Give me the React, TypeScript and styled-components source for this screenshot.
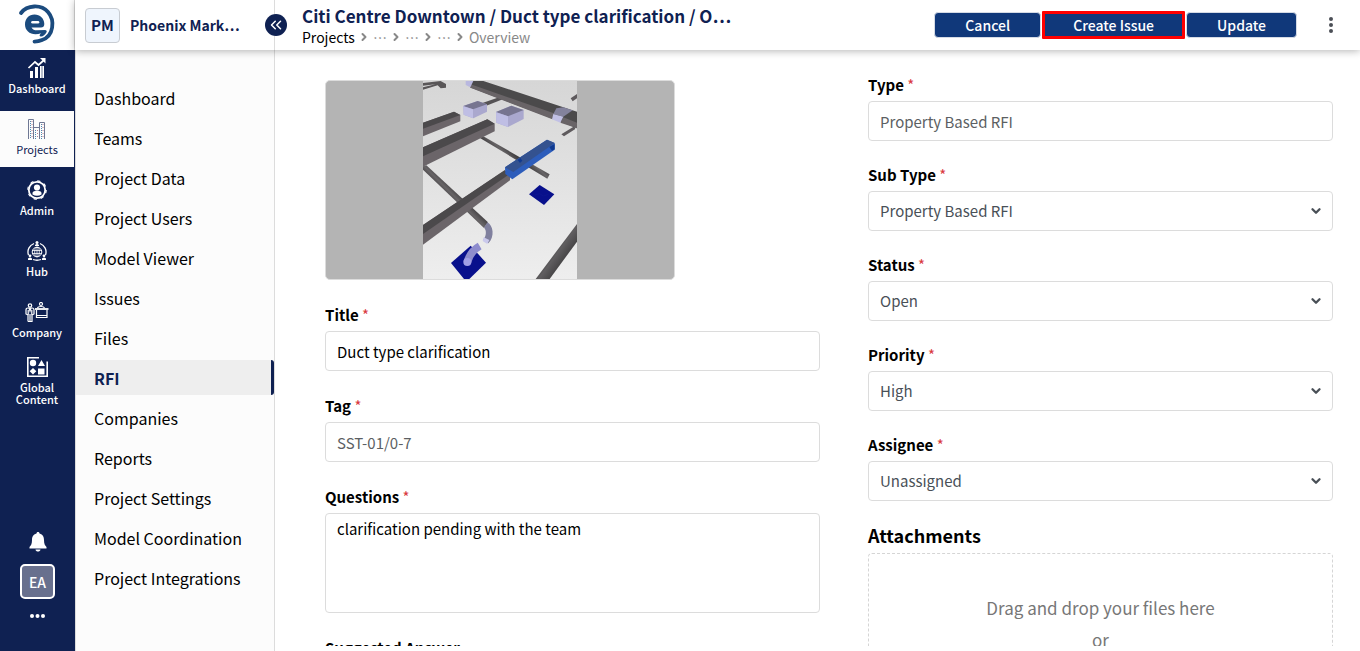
import React from "react";
import styled, { createGlobalStyle, css } from "styled-components";
import { ChevronDown, ChevronRight, ChevronsLeft } from "lucide-react";

const navy = "#0f2152";
const line = "#dcdcdc";

const GlobalStyle = createGlobalStyle`
  * { box-sizing: border-box; }
  body {
    margin: 0;
    background: #fff;
    font-family: "Noto Sans CJK JP", "Noto Sans", sans-serif;
    font-size: 15px;
    color: #000;
  }
  button, input, select, textarea { font: inherit; }
  button { cursor: pointer; }
`;

const Shell = styled.div`
  display: flex;
  height: 100vh;
  overflow: hidden;
`;

const Rail = styled.nav`
  display: flex;
  flex-direction: column;
  flex: 0 0 75px;
  background: ${navy};
`;

const LogoLink = styled.a`
  display: block;
  flex: 0 0 50px;
  background: #fff;
  border-right: 1px solid ${line};
  svg { display: block; }
`;

const RailLinks = styled.div`
  display: flex;
  flex-direction: column;
  gap: 5px;
  flex: 1;
`;

const RailLink = styled.a<{ $active?: boolean }>`
  display: flex;
  flex-direction: column;
  align-items: center;
  justify-content: center;
  gap: 4px;
  height: 56px;
  padding-bottom: 5px;
  margin-right: 1px;
  font-size: 11px;
  font-weight: ${(p) => (p.$active ? 400 : 500)};
  line-height: 12px;
  text-align: center;
  text-decoration: none;
  color: ${(p) => (p.$active ? navy : "#fff")};
  background: ${(p) => (p.$active ? "#fcfcfc" : "transparent")};
  svg { display: block; flex: none; }
`;

const RailFooter = styled.div`
  display: flex;
  flex-direction: column;
  align-items: center;
  gap: 12px;
  padding-bottom: 30px;
  color: #fff;
`;

const IconButton = styled.button`
  display: flex;
  padding: 0;
  border: 0;
  background: none;
  color: inherit;
`;

const Avatar = styled.button`
  width: 35px;
  height: 35px;
  padding: 0;
  border: 2px solid #fff;
  border-radius: 5px;
  background: #68708e;
  color: #fff;
  font-size: 14px;
  font-weight: 500;
  line-height: 20px;
`;

const Workspace = styled.div`
  display: flex;
  flex-direction: column;
  flex: 1;
  min-width: 0;
`;

const TopBar = styled.header`
  display: flex;
  align-items: stretch;
  flex: 0 0 50px;
  background: #fff;
  box-shadow: 0 1px 8px rgba(0, 0, 0, 0.3);
  z-index: 1;
`;

const ProjectSwitch = styled.div`
  position: relative;
  display: flex;
  align-items: center;
  gap: 10px;
  flex: 0 0 200px;
  padding-left: 10px;
  border-right: 1px solid ${line};
  color: ${navy};
  font-size: 14px;
  font-weight: 700;
  line-height: 20px;
  white-space: nowrap;
`;

const ProjectBadge = styled.span`
  display: flex;
  align-items: center;
  justify-content: center;
  width: 35px;
  height: 35px;
  border: 1px solid #c8ccd2;
  border-radius: 4px;
  background: #eff5fd;
  font-size: 15px;
`;

const CollapseButton = styled.button`
  position: absolute;
  right: -13px;
  top: 14px;
  display: flex;
  align-items: center;
  justify-content: center;
  width: 22px;
  height: 22px;
  padding: 0;
  border: 0;
  border-radius: 50%;
  background: ${navy};
  color: #fff;
`;

const Heading = styled.div`
  flex: 1;
  min-width: 0;
  padding: 5px 0 0 27px;
`;

const PageTitle = styled.h1`
  margin: 0;
  color: ${navy};
  font-size: 17px;
  font-weight: 700;
  line-height: 22px;
  white-space: nowrap;
`;

const Crumbs = styled.nav`
  display: flex;
  align-items: center;
  gap: 3px;
  color: #888;
  font-size: 14px;
  line-height: 20px;
  svg { flex: none; }
  a { color: #888; text-decoration: none; }
  a:first-child { color: #000; }
`;

const Actions = styled.div`
  display: flex;
  align-items: center;
  gap: 1px;
  padding-right: 24px;
`;

const ActionButton = styled.button<{ $marked?: boolean }>`
  height: ${(p) => (p.$marked ? 28 : 26)}px;
  padding: 0 30px;
  border: 1px solid #d5dbe5;
  border-radius: 4px;
  background: #10387a;
  color: #fff;
  font-size: 14px;
  font-weight: 500;
  line-height: 20px;
  ${(p) =>
    p.$marked &&
    css`
      padding: 0 28px;
      border: 3px solid #f00;
      border-radius: 1px;
    `}
`;

const MenuButton = styled(IconButton)`
  margin-left: 28px;
  color: #4b4f56;
`;

const Body = styled.div`
  display: flex;
  flex: 1;
  min-height: 0;
`;

const Sidebar = styled.nav`
  display: flex;
  flex-direction: column;
  gap: 5px;
  flex: 0 0 200px;
  padding-top: 30px;
  background: #fcfcfc;
  border: solid ${line};
  border-width: 0 1px;
`;

const SideLink = styled.a<{ $active?: boolean }>`
  display: flex;
  align-items: center;
  height: 35px;
  padding-left: 18px;
  border-right: 3px solid transparent;
  font-size: 16px;
  line-height: 20px;
  color: #000;
  text-decoration: none;
  ${(p) =>
    p.$active &&
    css`
      background: #eee;
      border-color: ${navy};
      border-radius: 0 3px 3px 0;
      color: ${navy};
      font-weight: 700;
    `}
`;

const Form = styled.form`
  display: grid;
  grid-template-columns: 33fr 31fr;
  align-items: start;
  gap: 48px;
  flex: 1;
  min-width: 0;
  margin-bottom: 5px;
  padding: 25px 27px 0 50px;
  overflow: hidden;
`;

const Column = styled.div<{ $gap: number; $top?: number }>`
  display: flex;
  flex-direction: column;
  gap: ${(p) => p.$gap}px;
  padding-top: ${(p) => p.$top ?? 0}px;
  min-width: 0;
`;

const Snapshot = styled.figure`
  display: flex;
  justify-content: center;
  width: 350px;
  max-width: 100%;
  height: 200px;
  margin: 0;
  border: 1px solid ${line};
  border-radius: 5px;
  background: #b4b4b4;
  overflow: hidden;
`;

const Field = styled.div`
  display: flex;
  flex-direction: column;
  gap: 6px;
`;

const Label = styled.label`
  font-size: 15px;
  font-weight: 700;
  line-height: 20px;
`;

const Star = styled.span`
  color: #d9393e;
  font-weight: 400;
`;

const control = css`
  width: 100%;
  height: 40px;
  padding: 0 11px;
  border: 1px solid ${line};
  border-radius: 4px;
  background: #fff;
  font-size: 15px;
  line-height: 20px;
  outline: 0;
`;

const TextBox = styled.input<{ $muted?: boolean }>`
  ${control}
  color: ${(p) => (p.$muted ? "#5c5f63" : "#000")};
`;

const TextArea = styled.textarea`
  ${control}
  display: block;
  height: 100px;
  padding: 5px 11px;
  color: #000;
  resize: none;
`;

const SelectWrap = styled.div`
  display: grid;
  align-items: center;
  > * { grid-area: 1 / 1; }
  svg { justify-self: end; margin-right: 10px; color: #495057; pointer-events: none; }
`;

const SelectBox = styled.select`
  ${control}
  appearance: none;
  color: #495057;
`;

const Attachments = styled.section`
  display: flex;
  flex-direction: column;
  gap: 8px;
`;

const SectionTitle = styled.h2`
  margin: 0;
  font-size: 18px;
  font-weight: 700;
  line-height: 20px;
`;

const DropZone = styled.div`
  display: flex;
  flex-direction: column;
  align-items: center;
  gap: 8px;
  height: 200px;
  padding-top: 42px;
  border: 1px dashed #d5d5d5;
  border-radius: 4px;
  color: #777;
  font-size: 17px;
  line-height: 24px;
`;

const Logo = () => (
  <svg width="74" height="50" viewBox="0 0 74 50" fill="none" stroke="#1b4b7e" strokeLinecap="round">
    <path d="M21 13C27 5 41 4 48 12C55 20 54 36 42 40C39 41.400 37 41.600 34.500 41.600" strokeWidth="3.800" />
    <path fill="#1b4b7e" stroke="none" d="M25 24.500C25 18.500 29 14.500 34.500 14.500C40 14.500 44.300 18.500 44.300 24C44.300 26.500 43 27.500 41 27.500H31.500C32.500 29.500 34.500 30.300 37 30.300L45 30C46.500 30 47.200 31 46.500 32.300C45 35.200 42.500 37 40.500 36.500C39 36 39.500 34.500 41 33.200C37 34.800 31 34.800 28 31.500C26 29.500 25 27.500 25 24.500Z" />
    <path stroke="#fff" strokeWidth="2.600" d="M32.500 22.200H38" />
  </svg>
);

const DashboardIcon = () => (
  <svg width="20" height="20" viewBox="0 0 20 20" fill="#fff">
    <path d="M3 13h3v7H3zM8 9h3v11H8zM13 8h4v12h-4z" />
    <path d="M15 8V20" stroke={navy} strokeWidth=".6" />
    <path d="M1.500 10L8 4L11.500 7L17 2" fill="none" stroke="#fff" strokeWidth="1.700" />
    <path d="M13 0H18.500V5.500Z" />
  </svg>
);

const ProjectsIcon = () => (
  <svg width="20" height="20" viewBox="0 0 20 20" fill="none" stroke="#6f7894">
    <path d="M1.500 20V.5H6.500V20M6.500 8.500H12.500V20M12.500 20V3.500H17.500V20" />
    <path d="M3.500 2V20M8.500 11V20M14.500 5V20" strokeDasharray="1 1" stroke="#4d88b1" />
    <path d="M5 2V20M10.500 11V20M16 5V20" strokeDasharray="1 2" stroke="#bd8191" />
  </svg>
);

const AdminIcon = () => (
  <svg width="20" height="20" viewBox="0 0 20 20" fill="none" stroke="#fff">
    <circle cx="10" cy="10" r="8.200" strokeWidth="1.800" />
    <circle cx="10" cy="10" r="9.200" strokeWidth="1.200" strokeDasharray="3.200 4.026" />
    <circle cx="10" cy="7.500" r="3.100" fill="#fff" stroke="none" />
    <path d="M5.500 14.500V13C5.500 10 14.500 10 14.500 13V14.500Q10 17 5.500 14.500Z" fill="#fff" stroke="none" />
  </svg>
);

const HubIcon = () => (
  <svg width="20" height="20" viewBox="0 0 20 20" fill="none" stroke="#fff">
    <circle cx="10" cy="11" r="4.800" />
    <path d="M10 6V16M5 9.500H15M5 12.500H15" strokeWidth=".8" />
    <ellipse cx="10" cy="11" rx="2.300" ry="4.800" strokeWidth=".8" />
    <path d="M7 2.500A9 9 0 0 0 1.500 14M13 2.500A9 9 0 0 1 18.500 14M6 18.500Q10 20 14 18.500" strokeWidth="1.300" />
    <g fill="#fff" stroke="none">
      <circle cx="10" cy="1.500" r="1.500" />
      <path d="M8 5V4Q10 2 12 4V5ZM1 19V17.500Q3 15.500 5 17.500V19ZM15 19V17.500Q17 15.500 19 17.500V19Z" />
      <circle cx="3" cy="14.800" r="1.400" />
      <circle cx="17" cy="14.800" r="1.400" />
    </g>
  </svg>
);

const CompanyIcon = () => (
  <svg width="24" height="20" viewBox="0 0 24 20" fill="none" stroke="#fff" strokeWidth="1.200">
    <circle cx="5" cy="3.500" r="1.700" />
    <path d="M3 19.500V13L1 12V8Q1 6 3 6H7Q9 6 9 8V12L7 13V19.500H3M5 12V19M3.200 8V13M6.800 8V13M4 6L5 9L6 6" />
    <circle cx="16" cy="2" r="1.500" />
    <path d="M12.500 6Q13 4.500 16 4.500Q19 4.500 19.500 6M11.500 8V15.500H22V8M11.500 13.500H22" />
    <path d="M10 7H23.500" strokeWidth="1.800" />
  </svg>
);

const ContentIcon = () => (
  <svg width="21" height="20" viewBox="0 0 21 20" fill="#fff">
    <path d="M.8 .8H12M.8 0V19.200H20.200V4.500" fill="none" stroke="#fff" strokeWidth="1.600" />
    <circle cx="6" cy="6" r="3.200" />
    <path d="M14.500 3L18 9H11ZM6 11L9.300 14.300L6 17.500L2.700 14.300ZM11 11.500H17.500V17.500H11Z" />
  </svg>
);

const BellIcon = () => (
  <svg width="18" height="20" viewBox="0 0 18 20" fill="currentColor">
    <path d="M9 0C10 0 10.500.6 10.500 1.500C14 2.500 15 5 15 8C15 12 16 13.500 17.500 15V16.500H.5V15C2 13.500 3 12 3 8C3 5 4 2.500 7.500 1.500C7.500.6 8 0 9 0ZM6.500 17.500H11.500C11.200 20.300 6.800 20.300 6.500 17.500Z" />
  </svg>
);

const MoreIcon = () => (
  <svg width="15" height="10" viewBox="0 0 15 10" fill="currentColor">
    <circle cx="2" cy="5" r="2" />
    <circle cx="7.500" cy="5" r="2" />
    <circle cx="13" cy="5" r="2" />
  </svg>
);

const KebabIcon = () => (
  <svg width="10" height="18" viewBox="0 0 10 18" fill="currentColor">
    <circle cx="5" cy="3" r="2" />
    <circle cx="5" cy="9" r="2" />
    <circle cx="5" cy="15" r="2" />
  </svg>
);

const DuctModel = () => (
  <svg width="154" height="198" viewBox="9 9 462 594" role="img" aria-label="Duct model">
    <defs>
      <linearGradient id="floor" x1="0" y1="0" x2="0" y2="1">
        <stop offset="0" stopColor="#d6d6d6" />
        <stop offset="1" stopColor="#eee" />
      </linearGradient>
      <linearGradient id="pipe" gradientUnits="userSpaceOnUse" x1="0" y1="0" x2="14" y2="-14" spreadMethod="reflect">
        <stop offset="0" stopColor="#403e40" />
        <stop offset="1" stopColor="#676466" />
      </linearGradient>
      <linearGradient id="riser" gradientUnits="userSpaceOnUse" x1="375" y1="530" x2="430" y2="570">
        <stop offset="0" stopColor="#353435" />
        <stop offset=".4" stopColor="#605e60" />
        <stop offset="1" stopColor="#3c3b3c" />
      </linearGradient>
    </defs>
    <rect x="9" y="9" width="462" height="594" fill="url(#floor)" />
    <path d="M9 15L62 9L78 18V29L62 31L53 22L9 35V28L46 19L9 23Z" fill="#595658" />
    <path d="M187 75L246 55L252 62L199 83Z" fill="#555254" />
    <path d="M154 9H190L471 101V151L430 134L150 28Z" fill="#4b4a4b" />
    <path d="M150 18L402 106L397 124L151 29ZM430 118L471 134V151L421 134Z" fill="#696467" />
    <path d="M137 9H160L151 28L137 21Z" fill="#b9b8df" />
    <path d="M409 91L430 88L458 97L430 116L400 108Z" fill="#83829c" />
    <path d="M400 108L430 116L421 134L396 124Z" fill="#c1c0e5" />
    <path d="M452 61L471 48V61L458 70ZM424 169L463 145L466 153L432 175Z" fill="#5e5a5d" />
    <path d="M130 84L173 69L201 79V101L160 121L131 110Z" fill="#aaa8ce" />
    <path d="M130 84L173 69L201 79L159 94Z" fill="#777590" />
    <path d="M130 85L159 94V121L131 110Z" fill="#bfbee4" />
    <path d="M228 102L274 83L311 96V123L264 147L229 134Z" fill="#aaa8ce" />
    <path d="M228 102L274 83L311 96L264 115Z" fill="#777590" />
    <path d="M228 103L264 115V147L229 134Z" fill="#bfbee4" />
    <path d="M9 134L102 101L121 111V130L9 175Z" fill="#6b6569" />
    <path d="M9 134L102 101L121 111L9 152Z" fill="#4b494b" />
    <path d="M180 180L190 175L389 289L382 302Z" fill="url(#pipe)" />
    <path d="M9 208L202 124L224 137V160L9 266Z" fill="#6b6569" />
    <path d="M9 208L202 124L224 137L9 235Z" fill="#4b494b" />
    <path d="M9 265L19 262L204 433L192 450L9 275Z" fill="url(#pipe)" />
    <path d="M9 441L254 277L270 287V307L9 500Z" fill="#6b6569" />
    <path d="M9 441L254 277L270 287L9 468Z" fill="#4b494b" />
    <path d="M255 268L381 185L404 195V215L277 304L256 288Z" fill="#2d5dbb" />
    <path d="M255 268L381 185L404 195L280 282Z" fill="#34528f" />
    <path d="M388 207L404 198V214L396 218ZM293 246L301 240L307 248L300 255Z" fill="#103a90" />
    <path d="M327 349L359 321L403 349L372 381Z" fill="#08108c" />
    <path d="M345 351L359 347L370 354L385 349" fill="none" stroke="#151d94" />
    <path d="M93 555L152 503L198 554L148 603H132Z" fill="#08108c" />
    <path d="M202 433C220 442 225 477 205 496L189 486C200 474 200 455 192 449Z" fill="#80809e" />
    <path d="M191 478L208 486L202 498L188 489Z" fill="#cac9ec" />
    <path d="M179 504C158 516 147 533 142 553" fill="none" stroke="#8d8ccd" strokeWidth="23" />
    <circle cx="142" cy="552" r="12" fill="#a09ee6" />
    <path d="M471 438V491L389 603H347Z" fill="url(#riser)" />
  </svg>
);

const railItems = [
  { name: "Dashboard", icon: <DashboardIcon /> },
  { name: "Projects", icon: <ProjectsIcon />, active: true },
  { name: "Admin", icon: <AdminIcon /> },
  { name: "Hub", icon: <HubIcon /> },
  { name: "Company", icon: <CompanyIcon /> },
  { name: "Global Content", icon: <ContentIcon /> },
];

const sideItems = [
  "Dashboard", "Teams", "Project Data", "Project Users", "Model Viewer", "Issues", "Files",
  "RFI", "Companies", "Reports", "Project Settings", "Model Coordination", "Project Integrations",
];

const selects = [
  { id: "subtype", name: "Sub Type", value: "Property Based RFI" },
  { id: "status", name: "Status", value: "Open" },
  { id: "priority", name: "Priority", value: "High" },
  { id: "assignee", name: "Assignee", value: "Unassigned" },
];

const FieldLabel = ({ id, children }: { id: string; children: React.ReactNode }) => (
  <Label htmlFor={id}>
    {children}
    <Star> *</Star>
  </Label>
);

export default function App() {
  return (
    <>
      <GlobalStyle />
      <Shell>
        <Rail aria-label="Main">
          <LogoLink href="#" aria-label="Home"><Logo /></LogoLink>
          <RailLinks>
            {railItems.map((item) => (
              <RailLink key={item.name} href="#" $active={item.active}>
                {item.icon}
                <span>{item.name}</span>
              </RailLink>
            ))}
          </RailLinks>
          <RailFooter>
            <IconButton aria-label="Notifications"><BellIcon /></IconButton>
            <Avatar>EA</Avatar>
            <IconButton aria-label="More"><MoreIcon /></IconButton>
          </RailFooter>
        </Rail>
        <Workspace>
          <TopBar>
            <ProjectSwitch>
              <ProjectBadge>PM</ProjectBadge>
              <span>Phoenix Mark…</span>
              <CollapseButton aria-label="Collapse menu"><ChevronsLeft size={18} strokeWidth={2} /></CollapseButton>
            </ProjectSwitch>
            <Heading>
              <PageTitle>Citi Centre Downtown / Duct type clarification / O…</PageTitle>
              <Crumbs aria-label="Breadcrumb">
                <a href="#">Projects</a>
                {[1, 2, 3].map((n) => (
                  <React.Fragment key={n}>
                    <ChevronRight size={12} strokeWidth={4} />
                    <a href="#">…</a>
                  </React.Fragment>
                ))}
                <ChevronRight size={12} strokeWidth={4} />
                <span>Overview</span>
              </Crumbs>
            </Heading>
            <Actions>
              <ActionButton>Cancel</ActionButton>
              <ActionButton $marked>Create Issue</ActionButton>
              <ActionButton>Update</ActionButton>
              <MenuButton aria-label="More actions"><KebabIcon /></MenuButton>
            </Actions>
          </TopBar>
          <Body>
            <Sidebar aria-label="Project">
              {sideItems.map((name) => (
                <SideLink key={name} href="#" $active={name === "RFI"}>{name}</SideLink>
              ))}
            </Sidebar>
            <Form>
              <Column $gap={25} $top={5}>
                <Snapshot><DuctModel /></Snapshot>
                <Field>
                  <FieldLabel id="title">Title</FieldLabel>
                  <TextBox id="title" defaultValue="Duct type clarification" />
                </Field>
                <Field>
                  <FieldLabel id="tag">Tag</FieldLabel>
                  <TextBox id="tag" $muted readOnly value="SST-01/0-7" />
                </Field>
                <Field>
                  <FieldLabel id="questions">Questions</FieldLabel>
                  <TextArea id="questions" defaultValue="clarification pending with the team" />
                </Field>
                <Field>
                  <Label htmlFor="answer">Suggested Answer</Label>
                  <TextArea id="answer" />
                </Field>
              </Column>
              <Column $gap={24}>
                <Field>
                  <FieldLabel id="type">Type</FieldLabel>
                  <TextBox id="type" $muted readOnly value="Property Based RFI" />
                </Field>
                {selects.map(({ id, name, value }) => (
                  <Field key={id}>
                    <FieldLabel id={id}>{name}</FieldLabel>
                    <SelectWrap>
                      <SelectBox id={id}><option>{value}</option></SelectBox>
                      <ChevronDown size={14} strokeWidth={4} />
                    </SelectWrap>
                  </Field>
                ))}
                <Attachments>
                  <SectionTitle>Attachments</SectionTitle>
                  <DropZone>
                    <span>Drag and drop your files here</span>
                    <span>or</span>
                  </DropZone>
                </Attachments>
              </Column>
            </Form>
          </Body>
        </Workspace>
      </Shell>
    </>
  );
}
